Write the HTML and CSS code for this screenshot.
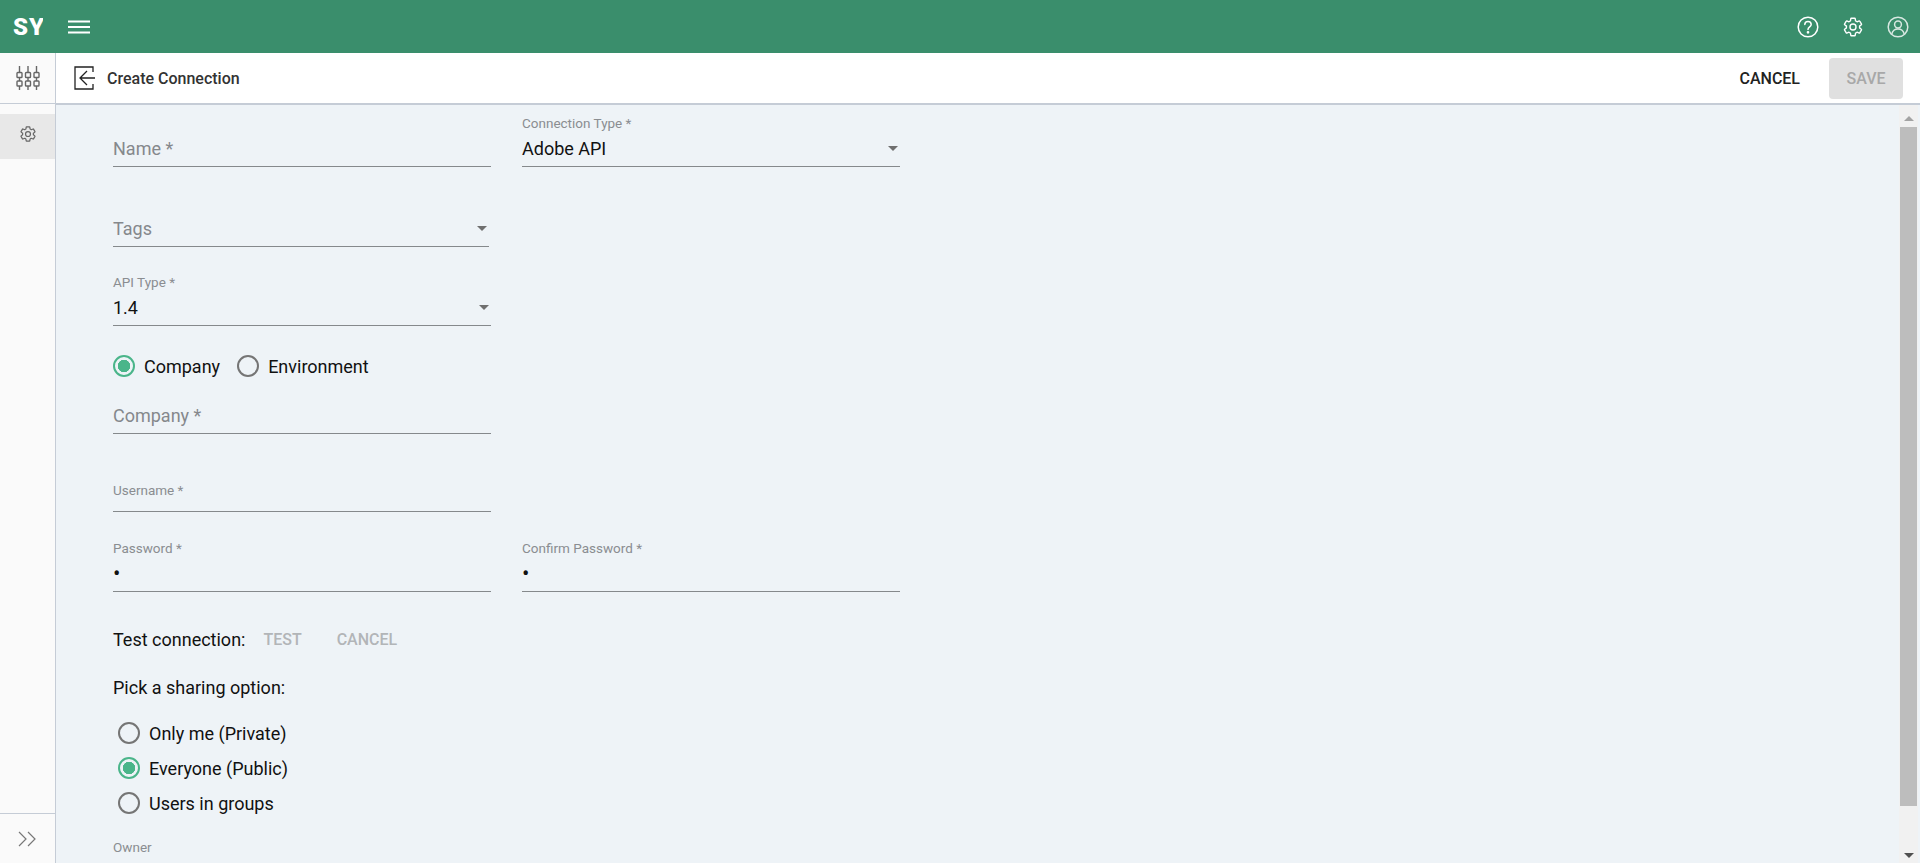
FILE: index.html
```html
<!DOCTYPE html>
<html lang="en">
<head>
    <meta charset="UTF-8">
    <meta name="viewport" content="width=device-width, initial-scale=1.0">
    <title>Create Connection</title>
    <link rel="stylesheet" href="styles.css">
</head>
<body>
    <header class="topbar">
        <div class="logo">S<span class="logo-cut">Y</span></div>
        <svg class="menu-icon" width="22" height="14" viewBox="0 0 22 14"><path d="M0 1.500h22M0 7h22M0 12.500h22" stroke="#fff" stroke-width="2"/></svg>
        <div class="topbar-icons">
            <svg width="22" height="22" viewBox="0 0 22 22" fill="none" stroke="#fff" stroke-width="1.500"><circle cx="11" cy="11" r="9.800"/><path d="M7.800 8.600a3.200 3.200 0 0 1 6.400 0c0 2.200-3.200 2.400-3.200 4.800" stroke-linecap="round"/><circle cx="11" cy="16.300" r=".6" fill="#fff"/></svg>
            <svg width="22" height="22" viewBox="0 0 24 24" fill="none" stroke="#fff" stroke-width="1.500" stroke-linejoin="round"><path d="M19.140 12.940c.04-.3.06-.61.06-.94 0-.32-.02-.64-.07-.94l2.030-1.580c.18-.14.23-.41.12-.61l-1.920-3.320c-.12-.22-.37-.29-.59-.22l-2.390.96c-.5-.38-1.030-.7-1.620-.94l-.36-2.540c-.04-.24-.24-.41-.48-.41h-3.840c-.24 0-.43.17-.47.41l-.36 2.540c-.59.24-1.130.57-1.620.94l-2.390-.96c-.22-.08-.47 0-.59.22L2.740 8.870c-.12.21-.08.47.12.61l2.030 1.580c-.05.3-.09.63-.09.94s.02.64.07.94l-2.030 1.580c-.18.14-.23.41-.12.61l1.920 3.320c.12.22.37.29.59.22l2.390-.96c.5.38 1.030.7 1.620.94l.36 2.540c.05.24.24.41.48.41h3.840c.24 0 .44-.17.47-.41l.36-2.540c.59-.24 1.130-.56 1.620-.94l2.390.96c.22.08.47 0 .59-.22l1.920-3.320c.12-.22.07-.47-.12-.61l-2.010-1.580z"/><circle cx="12" cy="12" r="3.300"/></svg>
            <svg class="user-icon" width="22" height="22" viewBox="0 0 22 22" fill="none" stroke="#fff" stroke-width="1.500"><circle cx="11" cy="11" r="9.800"/><circle cx="11" cy="8.500" r="3.400"/><path d="M4.800 18c.8-3.500 3-5 6.200-5s5.400 1.500 6.200 5"/></svg>
        </div>
    </header>

    <div class="app-body">
        <aside class="rail">
            <div class="rail-top">
                <svg width="24" height="24" viewBox="0 0 24 24" fill="none" stroke="#666" stroke-width="1.400"><path d="M3.500 0v6M12 0v6M20.500 0v6M3.500 12v3M12 12v3M20.500 12v3M3.500 20v4M12 20v4M20.500 20v4"/><rect x="1" y="6.500" width="5" height="5" rx=".8"/><rect x="9.500" y="6.500" width="5" height="5" rx=".8"/><rect x="18" y="6.500" width="5" height="5" rx=".8"/><rect x="1" y="15" width="5" height="5" rx=".8"/><rect x="9.500" y="15" width="5" height="5" rx=".8"/><rect x="18" y="15" width="5" height="5" rx=".8"/></svg>
            </div>
            <div class="rail-item">
                <svg width="18" height="18" viewBox="0 0 24 24" fill="none" stroke="#666" stroke-width="1.600" stroke-linejoin="round"><path d="M19.140 12.940c.04-.3.06-.61.06-.94 0-.32-.02-.64-.07-.94l2.030-1.580c.18-.14.23-.41.12-.61l-1.920-3.320c-.12-.22-.37-.29-.59-.22l-2.390.96c-.5-.38-1.030-.7-1.620-.94l-.36-2.540c-.04-.24-.24-.41-.48-.41h-3.840c-.24 0-.43.17-.47.41l-.36 2.540c-.59.24-1.130.57-1.620.94l-2.390-.96c-.22-.08-.47 0-.59.22L2.740 8.870c-.12.21-.08.47.12.61l2.030 1.580c-.05.3-.09.63-.09.94s.02.64.07.94l-2.030 1.580c-.18.14-.23.41-.12.61l1.920 3.320c.12.22.37.29.59.22l2.390-.96c.5.38 1.030.7 1.620.94l.36 2.540c.05.24.24.41.48.41h3.840c.24 0 .44-.17.47-.41l.36-2.540c.59-.24 1.130-.56 1.620-.94l2.390.96c.22.08.47 0 .59-.22l1.920-3.320c.12-.22.07-.47-.12-.61l-2.010-1.580z"/><circle cx="12" cy="12" r="3.300"/></svg>
            </div>
            <div class="rail-bottom">
                <svg width="19" height="16" viewBox="0 0 19 16" fill="none" stroke="#777" stroke-width="1.200"><path d="M1 1l7 7-7 7M10 1l7 7-7 7"/></svg>
            </div>
        </aside>

        <div class="content">
            <div class="subheader">
                <svg class="back-icon" width="21" height="24" viewBox="0 0 21 24" fill="none" stroke="#222" stroke-width="1.300"><path d="M19 6V1H1v22h18v-5"/><path d="M21 12H7M13 5l-7 7 7 7"/></svg>
                <h1>Create Connection</h1>
                <button class="btn-cancel">CANCEL</button>
                <button class="btn-save">SAVE</button>
            </div>

            <div class="scroll-area">
                <form class="form">
                    <div class="row row-name">
                        <div class="field"><span class="placeholder">Name *</span></div>
                        <div class="field">
                            <label>Connection Type *</label>
                            <span class="value">Adobe API</span>
                            <i class="caret"></i>
                        </div>
                    </div>
                    <div class="row row-tags">
                        <div class="field field-short"><span class="placeholder">Tags</span><i class="caret"></i></div>
                    </div>
                    <div class="row row-api">
                        <div class="field">
                            <label>API Type *</label>
                            <span class="value">1.4</span>
                            <i class="caret"></i>
                        </div>
                    </div>
                    <div class="radio-inline">
                        <span class="radio checked">Company</span>
                        <span class="radio">Environment</span>
                    </div>
                    <div class="row row-company">
                        <div class="field"><span class="placeholder">Company *</span></div>
                    </div>
                    <div class="row row-user">
                        <div class="field"><label>Username *</label></div>
                    </div>
                    <div class="row row-pass">
                        <div class="field"><label>Password *</label><span class="value dot">•</span></div>
                        <div class="field"><label>Confirm Password *</label><span class="value dot">•</span></div>
                    </div>
                    <div class="test-row">
                        <span>Test connection:</span>
                        <button type="button">TEST</button>
                        <button type="button">CANCEL</button>
                    </div>
                    <p class="share-title">Pick a sharing option:</p>
                    <div class="radio-stack">
                        <span class="radio">Only me (Private)</span>
                        <span class="radio checked">Everyone (Public)</span>
                        <span class="radio">Users in groups</span>
                    </div>
                    <div class="owner">
                        <label>Owner</label>
                        <span class="value">System Base</span>
                    </div>
                </form>
                <div class="scrollbar">
                    <i class="arrow-up"></i>
                    <div class="thumb"></div>
                    <i class="arrow-down"></i>
                </div>
            </div>
        </div>
    </div>
</body>
</html>
```

FILE: styles.css
```css
* {
    margin: 0;
    padding: 0;
    box-sizing: border-box;
    font-family: 'Roboto', sans-serif;
}

html, body {
    height: 100%;
    overflow: hidden;
}

body {
    display: flex;
    flex-direction: column;
    color: #111;
}

.topbar {
    height: 53px;
    flex: none;
    background: #3a8e6c;
    display: flex;
    align-items: center;
    padding-left: 13px;
}

.logo {
    width: 30px;
    overflow: hidden;
    white-space: nowrap;
    color: #fff;
    font-size: 24px;
    font-weight: 900;
}

.logo-cut {
    margin-left: 1px;
}

.menu-icon {
    margin-left: 25px;
}

.topbar-icons {
    margin-left: auto;
    display: flex;
    gap: 23px;
    padding-right: 11px;
}

.user-icon {
    opacity: 0.8;
}

.app-body {
    flex: 1;
    display: flex;
    min-height: 0;
}

.rail {
    width: 56px;
    flex: none;
    background: #fafafa;
    border-right: 1px solid #c5ccd6;
    display: flex;
    flex-direction: column;
}

.rail-top {
    height: 51px;
    display: flex;
    align-items: center;
    justify-content: center;
    border-bottom: 1px solid #c5ccd6;
    flex: none;
}

.rail-item {
    height: 45px;
    margin-top: 10px;
    padding-bottom: 5px;
    background: #e8e8e8;
    display: flex;
    align-items: center;
    justify-content: center;
}

.rail-bottom {
    margin-top: auto;
    height: 50px;
    border-top: 1px solid #c5ccd6;
    display: flex;
    align-items: center;
    justify-content: center;
}

.content {
    flex: 1;
    display: flex;
    flex-direction: column;
    min-width: 0;
}

.subheader {
    height: 52px;
    flex: none;
    background: #fff;
    border-bottom: 2px solid #c5ccd6;
    display: flex;
    align-items: center;
    padding: 0 17px 0 18px;
}

.subheader h1 {
    font-size: 16px;
    font-weight: 500;
    color: #333;
    margin-left: 12px;
}

.btn-cancel {
    margin-left: auto;
    background: none;
    border: none;
    font-size: 16px;
    font-weight: 500;
    color: #222;
}

.btn-save {
    margin-left: 29px;
    width: 74px;
    height: 41px;
    border: none;
    border-radius: 4px;
    background: #e0e0e0;
    color: #a8a8a8;
    font-size: 16px;
    font-weight: 500;
}

.scroll-area {
    flex: 1;
    display: flex;
    min-height: 0;
    background: #eef3f7;
    overflow: hidden;
}

.form {
    flex: 1;
    padding-left: 57px;
    min-width: 0;
}

.row {
    display: flex;
    gap: 31px;
}

.field {
    position: relative;
    width: 378px;
    height: 50px;
    border-bottom: 1px solid #85898c;
    display: flex;
    flex-direction: column;
    justify-content: flex-end;
    padding-bottom: 6px;
}

.field-short {
    width: 376px;
}

.row-name { margin-top: 12px; }
.row-tags { margin-top: 30px; }
.row-api { margin-top: 29px; }
.row-company { margin-top: 7px; }
.row-user { margin-top: 28px; }
.row-pass { margin-top: 30px; }

label {
    display: block;
    font-size: 13.500px;
    color: #8a8d91;
    line-height: 15px;
    margin-bottom: 7px;
}

.placeholder {
    font-size: 18px;
    line-height: 22px;
    color: #85888c;
}

.value {
    font-size: 18px;
    line-height: 22px;
    color: #111;
}

.dot {
    font-size: 22px;
}

.caret {
    position: absolute;
    right: 2px;
    bottom: 15px;
    border-left: 5px solid transparent;
    border-right: 5px solid transparent;
    border-top: 5px solid #6f6f6f;
}

.radio {
    display: flex;
    align-items: center;
    gap: 9px;
    font-size: 18px;
    color: #111;
}

.radio::before {
    content: "";
    box-sizing: border-box;
    width: 22px;
    height: 22px;
    flex: none;
    border-radius: 50%;
    border: 2px solid #757575;
}

.radio.checked::before {
    border-color: #4ab58a;
    background: radial-gradient(circle, #4ab58a 0 6px, transparent 6.500px);
}

.radio-inline {
    display: flex;
    gap: 17px;
    margin-top: 29px;
    height: 22px;
}

.test-row {
    display: flex;
    align-items: center;
    margin-top: 36px;
    height: 22px;
    font-size: 18px;
}

.test-row button {
    background: none;
    border: none;
    color: #b2b5b8;
    font-size: 16px;
    font-weight: 500;
}

.test-row button:first-of-type {
    margin-left: 18px;
    margin-right: 35px;
}

.share-title {
    margin-top: 27px;
    font-size: 18px;
    line-height: 22px;
}

.radio-stack {
    display: flex;
    flex-direction: column;
    gap: 13px;
    margin-top: 23px;
    padding-left: 5px;
}

.radio-stack .radio {
    height: 22px;
}

.owner {
    margin-top: 26px;
}

.owner label {
    margin-bottom: 4px;
}

.scrollbar {
    width: 19px;
    margin-right: 2px;
    flex: none;
    background: #f1f1f1;
    display: flex;
    flex-direction: column;
    align-items: center;
}

.thumb {
    width: 17px;
    height: 679px;
    margin-top: 6px;
    background: #bdbdbd;
}

.arrow-up {
    margin-top: 11px;
    width: 0;
    border-left: 5px solid transparent;
    border-right: 5px solid transparent;
    border-bottom: 5px solid #a3a3a3;
}

.arrow-down {
    margin-top: auto;
    margin-bottom: 5px;
    width: 0;
    border-left: 5px solid transparent;
    border-right: 5px solid transparent;
    border-top: 5px solid #505050;
}
```
